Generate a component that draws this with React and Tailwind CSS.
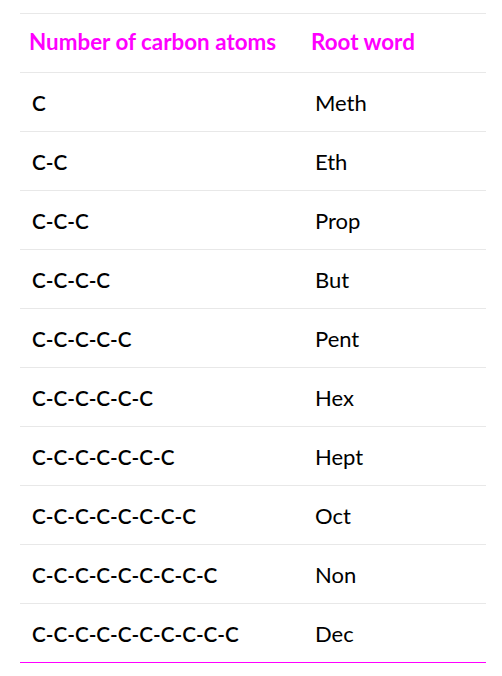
export default function App() {
  const rows = [
    ["C", "Meth"],
    ["C-C", "Eth"],
    ["C-C-C", "Prop"],
    ["C-C-C-C", "But"],
    ["C-C-C-C-C", "Pent"],
    ["C-C-C-C-C-C", "Hex"],
    ["C-C-C-C-C-C-C", "Hept"],
    ["C-C-C-C-C-C-C-C", "Oct"],
    ["C-C-C-C-C-C-C-C-C", "Non"],
    ["C-C-C-C-C-C-C-C-C-C", "Dec"],
  ];
  return (
    <div className="w-[502px] h-[676px] bg-white pt-[13px] px-[20px] font-['Lato','Liberation_Sans',sans-serif]">
      <table className="w-[466px] border-collapse table-fixed">
        <colgroup>
          <col className="w-[282px]" />
          <col />
        </colgroup>
        <thead>
          <tr className="h-[59px] border-t border-[#e8e8e8]">
            <th className="text-left font-bold text-[22.4px] text-[#ff00ff] pl-[9px] pb-[2px] align-middle">Number of carbon atoms</th>
            <th className="text-left font-bold text-[22.4px] text-[#ff00ff] pl-[9px] pb-[2px] align-middle">Root word</th>
          </tr>
        </thead>
        <tbody>
          {rows.map(([a, b], i) => (
            <tr key={i} className={"h-[59px] border-t " + (i === rows.length - 1 ? "border-b border-b-[#ff00ff] border-t-[#e8e8e8]" : "border-[#e8e8e8]")}>
              <td className="pl-[12px] pt-[3px] font-semibold text-[20.7px] text-black align-middle">{a}</td>
              <td className="pl-[13px] font-normal text-[22px] text-black align-middle">{b}</td>
            </tr>
          ))}
        </tbody>
      </table>
    </div>
  );
}
